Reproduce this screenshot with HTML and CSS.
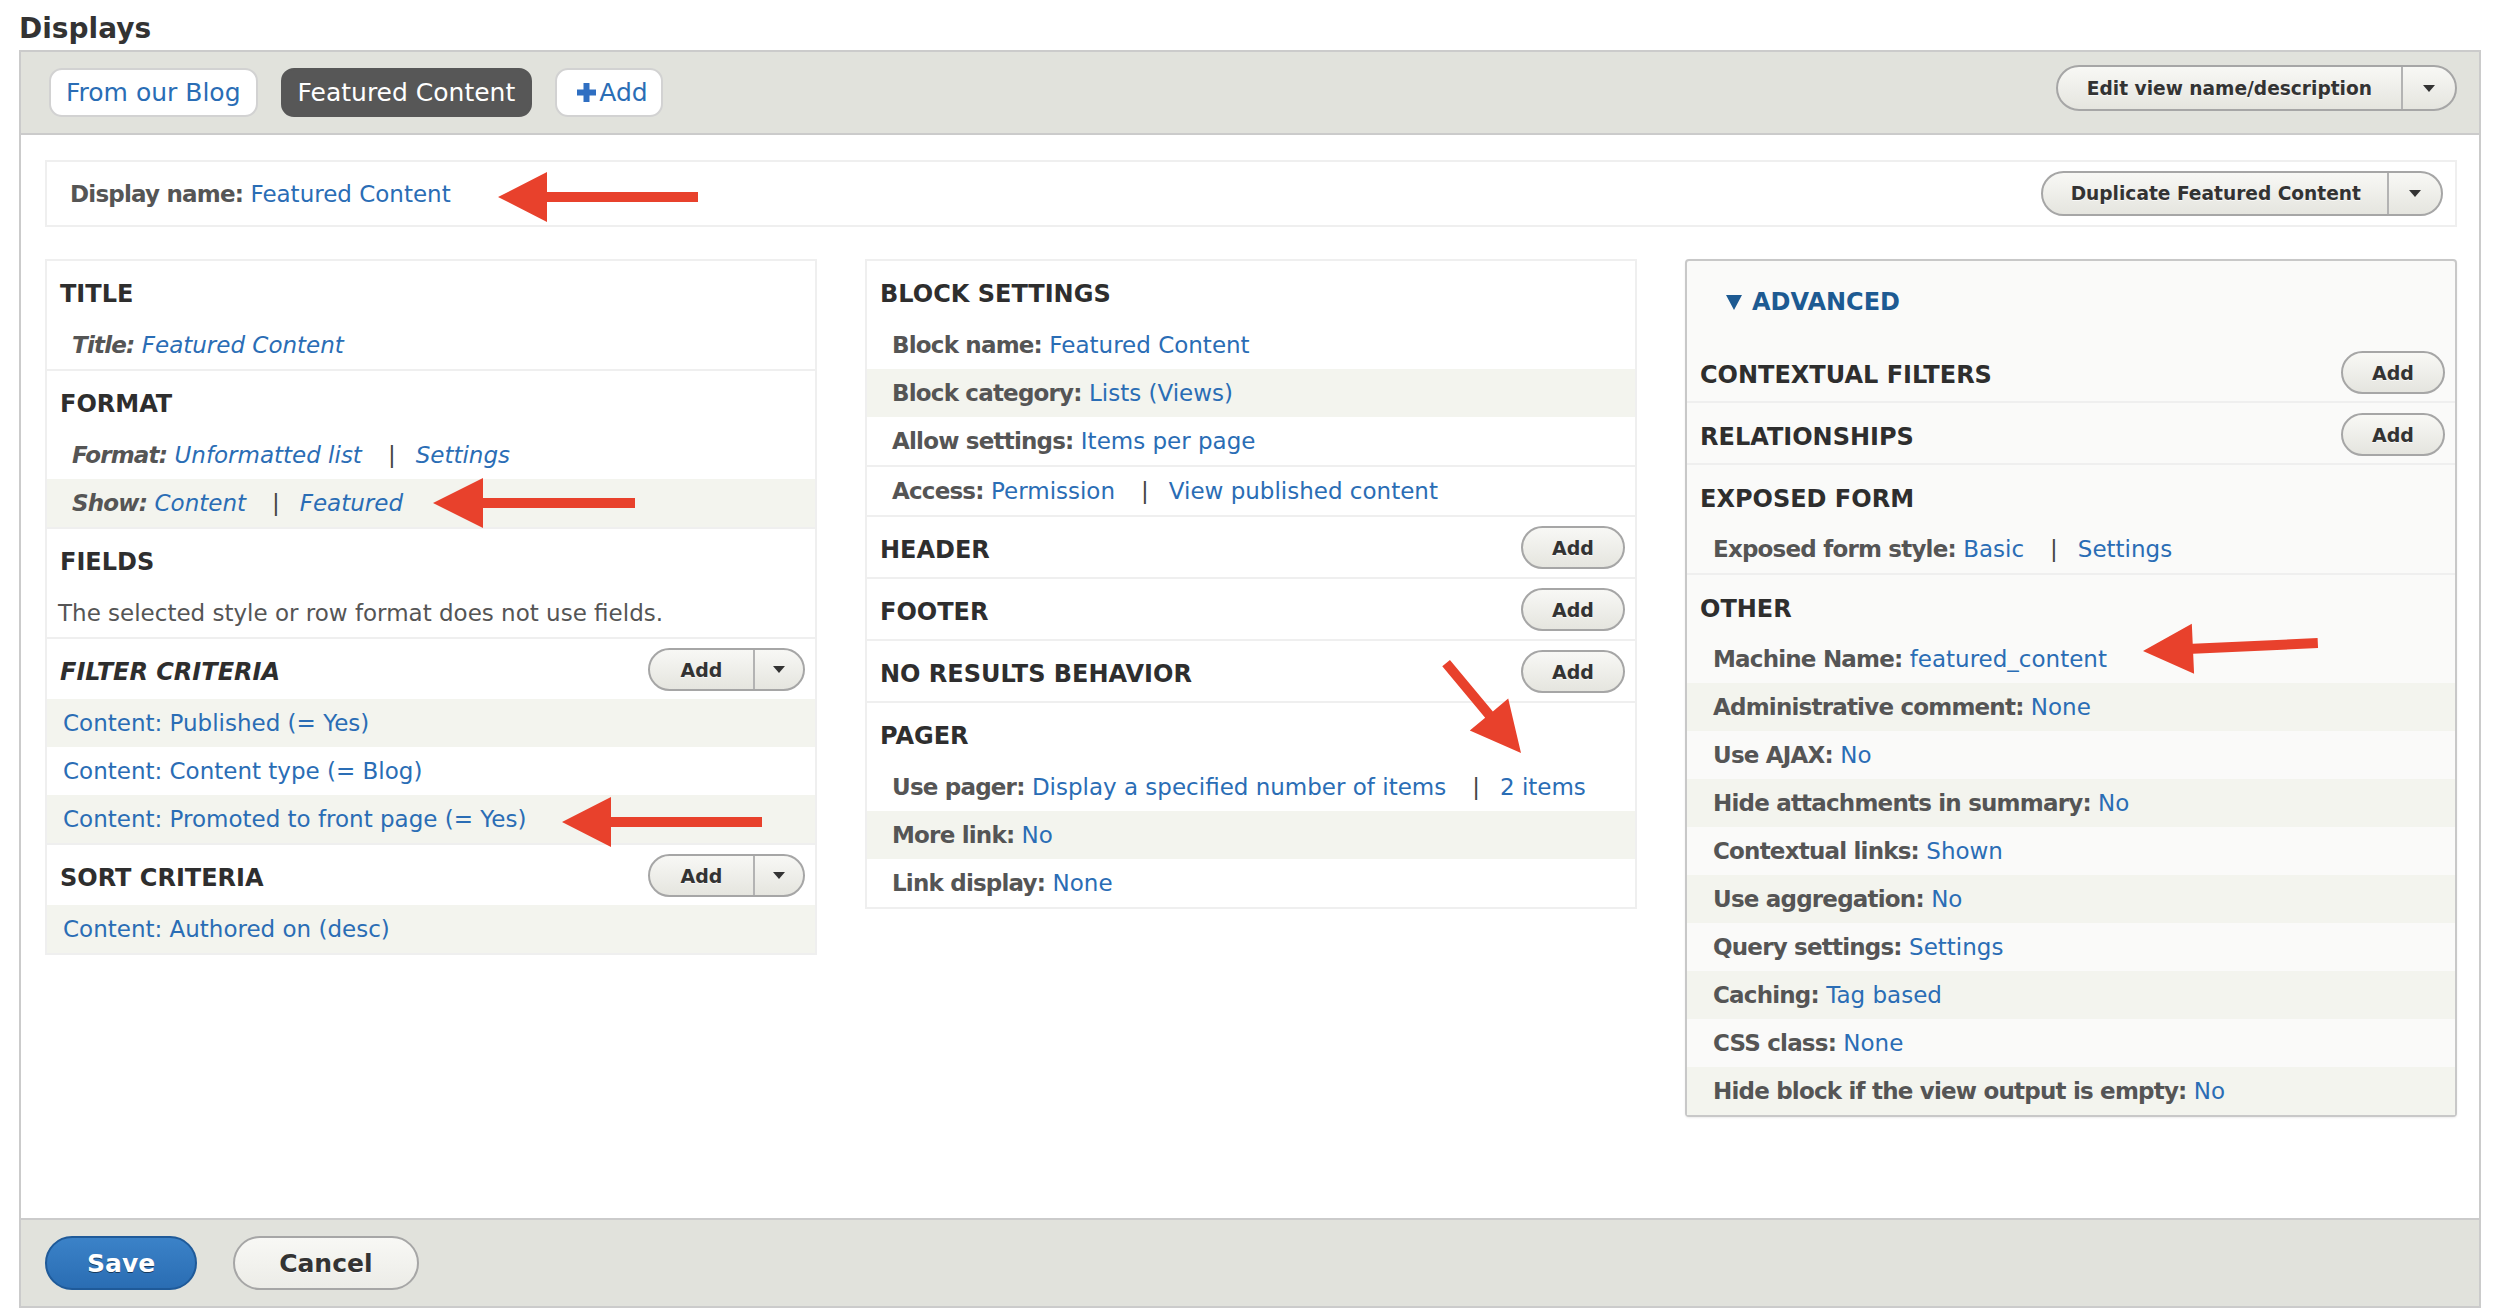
FILE: index.html
```html
<!DOCTYPE html>
<html lang="en">
<head>
<meta charset="utf-8">
<title>Displays</title>
<link rel="stylesheet" href="styles.css">
</head>
<body>
<div class="page">
  <h2 class="page-title">Displays</h2>
  <div class="displays">
    <div class="topbar">
      <div class="tabs">
        <a class="tab">From our Blog</a>
        <a class="tab active">Featured Content</a>
        <a class="tab add"><svg class="plus" width="19" height="19" viewBox="0 0 19 19"><path d="M6.5 0h6v6.5H19v6h-6.5V19h-6v-6.5H0v-6h6.5z" fill="currentColor"/></svg>Add</a>
      </div>
      <div class="split edit"><span class="split-main">Edit view name/description</span><span class="split-arrow"><i class="caret"></i></span></div>
    </div>

    <div class="body">
      <div class="namebox">
        <div class="nameline"><span class="label">Display name:</span> <a class="lnk">Featured Content</a></div>
        <div class="split dup"><span class="split-main">Duplicate Featured Content</span><span class="split-arrow"><i class="caret"></i></span></div>
      </div>

      <div class="columns">
        <!-- left column -->
        <div class="col">
          <section class="sec">
            <div class="sec-head"><h3>TITLE</h3></div>
            <div class="row ov"><span class="label">Title:</span> <a class="lnk">Featured Content</a></div>
          </section>
          <section class="sec">
            <div class="sec-head"><h3>FORMAT</h3></div>
            <div class="row ov"><span class="label">Format:</span> <a class="lnk">Unformatted list</a><span class="sep">|</span><a class="lnk">Settings</a></div>
            <div class="row ov alt"><span class="label">Show:</span> <a class="lnk">Content</a><span class="sep">|</span><a class="lnk">Featured</a></div>
          </section>
          <section class="sec">
            <div class="sec-head"><h3>FIELDS</h3></div>
            <div class="row note">The selected style or row format does not use fields.</div>
          </section>
          <section class="sec">
            <div class="sec-head"><h3 class="ovh">FILTER CRITERIA</h3>
              <div class="split small"><span class="split-main">Add</span><span class="split-arrow"><i class="caret"></i></span></div>
            </div>
            <div class="row lrow alt"><a class="lnk">Content: Published (= Yes)</a></div>
            <div class="row lrow"><a class="lnk">Content: Content type (= Blog)</a></div>
            <div class="row lrow alt"><a class="lnk">Content: Promoted to front page (= Yes)</a></div>
          </section>
          <section class="sec">
            <div class="sec-head"><h3>SORT CRITERIA</h3>
              <div class="split small"><span class="split-main">Add</span><span class="split-arrow"><i class="caret"></i></span></div>
            </div>
            <div class="row lrow alt"><a class="lnk">Content: Authored on (desc)</a></div>
          </section>
        </div>

        <!-- middle column -->
        <div class="col">
          <section class="sec">
            <div class="sec-head"><h3>BLOCK SETTINGS</h3></div>
            <div class="row"><span class="label">Block name:</span> <a class="lnk">Featured Content</a></div>
            <div class="row alt"><span class="label">Block category:</span> <a class="lnk">Lists (Views)</a></div>
            <div class="row"><span class="label">Allow settings:</span> <a class="lnk">Items per page</a></div>
          </section>
          <section class="sec">
            <div class="row"><span class="label">Access:</span> <a class="lnk">Permission</a><span class="sep">|</span><a class="lnk">View published content</a></div>
          </section>
          <section class="sec">
            <div class="sec-head"><h3>HEADER</h3><a class="btn">Add</a></div>
          </section>
          <section class="sec">
            <div class="sec-head"><h3>FOOTER</h3><a class="btn">Add</a></div>
          </section>
          <section class="sec">
            <div class="sec-head"><h3>NO RESULTS BEHAVIOR</h3><a class="btn">Add</a></div>
          </section>
          <section class="sec">
            <div class="sec-head"><h3>PAGER</h3></div>
            <div class="row"><span class="label">Use pager:</span> <a class="lnk">Display a specified number of items</a><span class="sep">|</span><a class="lnk">2 items</a></div>
            <div class="row alt"><span class="label">More link:</span> <a class="lnk">No</a></div>
            <div class="row"><span class="label">Link display:</span> <a class="lnk">None</a></div>
          </section>
        </div>

        <!-- right column -->
        <div class="col adv">
          <div class="adv-summary"><i class="tri"></i>ADVANCED</div>
          <section class="sec">
            <div class="sec-head"><h3>CONTEXTUAL FILTERS</h3><a class="btn">Add</a></div>
          </section>
          <section class="sec">
            <div class="sec-head"><h3>RELATIONSHIPS</h3><a class="btn">Add</a></div>
          </section>
          <section class="sec">
            <div class="sec-head"><h3>EXPOSED FORM</h3></div>
            <div class="row"><span class="label">Exposed form style:</span> <a class="lnk">Basic</a><span class="sep">|</span><a class="lnk">Settings</a></div>
          </section>
          <section class="sec">
            <div class="sec-head"><h3>OTHER</h3></div>
            <div class="row"><span class="label">Machine Name:</span> <a class="lnk">featured_content</a></div>
            <div class="row alt"><span class="label">Administrative comment:</span> <a class="lnk">None</a></div>
            <div class="row"><span class="label">Use AJAX:</span> <a class="lnk">No</a></div>
            <div class="row alt"><span class="label">Hide attachments in summary:</span> <a class="lnk">No</a></div>
            <div class="row"><span class="label">Contextual links:</span> <a class="lnk">Shown</a></div>
            <div class="row alt"><span class="label">Use aggregation:</span> <a class="lnk">No</a></div>
            <div class="row"><span class="label">Query settings:</span> <a class="lnk">Settings</a></div>
            <div class="row alt"><span class="label">Caching:</span> <a class="lnk">Tag based</a></div>
            <div class="row"><span class="label">CSS class:</span> <a class="lnk">None</a></div>
            <div class="row alt"><span class="label">Hide block if the view output is empty:</span> <a class="lnk">No</a></div>
          </section>
        </div>
      </div>
    </div>

    <div class="actions">
      <button class="btn-save" type="button">Save</button>
      <button class="btn-cancel" type="button">Cancel</button>
    </div>
  </div>

  <svg class="annot" width="2494" height="1310" viewBox="0 0 2494 1310">
    <g fill="#e8412c">
      <polygon points="498,197 547,172 547,192 698,192 698,202 547,202 547,222"/>
      <polygon points="433,503 483,478 483,498 635,498 635,508 483,508 483,528"/>
      <polygon points="562,822 611,797 611,817 762,817 762,827 611,827 611,847"/>
      <polygon transform="translate(1521 753) rotate(50.2)" points="0,0 -50,-25 -50,-5 -117,-5 -117,5 -50,5 -50,25"/>
      <polygon transform="translate(2143 651) rotate(-2.6)" points="0,0 50,-25 50,-5 175,-5 175,5 50,5 50,25"/>
    </g>
  </svg>
</div>
</body>
</html>
```

FILE: styles.css
```css
* { box-sizing: border-box; }
html, body { margin: 0; padding: 0; background: #fff; }
body {
  font-family: "DejaVu Sans", "Liberation Sans", sans-serif;
  font-size: 23px;
  color: #333;
}
.page {
  position: relative;
  width: 2494px;
  height: 1310px;
  padding: 0 13px 0 19px;
  overflow: hidden;
}
.page-title {
  margin: 0 0 6px;
  padding-top: 14px;
  font-size: 28px;
  line-height: 30px;
  font-weight: bold;
  color: #333;
}
.displays { border: 2px solid #cbcbcb; }

/* top bar */
.topbar {
  display: flex;
  justify-content: space-between;
  align-items: flex-start;
  background: #e1e2dc;
  border-bottom: 2px solid #cbcbcb;
  padding: 16px 22px 16px 28px;
}
.tabs { display: flex; gap: 23px; }
.tab {
  display: flex;
  align-items: center;
  height: 49px;
  padding: 0 15px;
  border: 2px solid #d2d2d2;
  border-radius: 13px;
  background: #fff;
  font-size: 25px;
  color: #2a6db5;
  white-space: nowrap;
}
.tab.active { background: #575757; border-color: #575757; color: #fff; }
.tab.add { padding: 0 13px 0 20px; gap: 3px; }
.plus { color: #2f6fc2; display: block; }

/* buttons */
.split {
  display: flex;
  align-items: stretch;
  border: 2px solid #a6a6a6;
  border-radius: 24px;
  background: linear-gradient(#f8f8f5, #e5e5df);
  font-size: 18.6px;
  font-weight: bold;
  color: #333;
  text-shadow: 0 1px rgba(255,255,255,0.7);
  white-space: nowrap;
}
.split-main { display: flex; align-items: center; justify-content: center; padding: 0 29px; }
.split-arrow {
  display: flex;
  align-items: center;
  justify-content: center;
  width: 54px;
  border-left: 2px solid #b3b3b3;
}
.caret {
  display: block;
  width: 0;
  height: 0;
  border-left: 6px solid transparent;
  border-right: 6px solid transparent;
  border-top: 7px solid #333;
}
.split.edit { height: 46px; margin-top: -3px; }
.split.dup { height: 45px; }
.split.dup .split-main { padding: 0 26px 0 28px; }
.split.small { height: 43px; font-size: 19px; }
.split.small .split-main { width: 103px; padding: 0; }
.split.small .split-arrow { width: 50px; }

.btn {
  display: flex;
  align-items: center;
  justify-content: center;
  width: 104px;
  height: 43px;
  border: 2px solid #a6a6a6;
  border-radius: 22px;
  background: linear-gradient(#f8f8f5, #e5e5df);
  font-size: 19px;
  font-weight: bold;
  color: #333;
  text-shadow: 0 1px rgba(255,255,255,0.7);
}

/* body */
.body { padding: 25px 22px 101px 24px; }
.namebox {
  display: flex;
  align-items: center;
  justify-content: space-between;
  height: 67px;
  border: 2px solid #efefef;
  padding: 0 12px 0 23px;
}
.label { font-weight: bold; color: #555; letter-spacing: -0.8px; }
.lnk { color: #2a6db5; }
.sep { margin: 0 20px 0 26px; color: #444; }

.columns {
  display: grid;
  grid-template-columns: repeat(3, 1fr);
  gap: 48px;
  align-items: start;
  margin-top: 32px;
}
.col { border: 2px solid #efefef; background: #fff; }
.col.adv {
  background: #fafaf9;
  border-color: #c8c8c8;
  border-radius: 4px;
  box-shadow: 0 1px 2px rgba(0,0,0,0.08);
}
.sec { border-bottom: 2px solid #efefef; }
.sec:last-child { border-bottom: none; }
.sec-head {
  display: flex;
  align-items: center;
  justify-content: space-between;
  height: 60px;
  padding: 6px 10px 0 13px;
}
.sec-head .btn, .sec-head .split { margin-top: -5px; }
.sec-head h3 {
  margin: 0;
  font-size: 24px;
  font-weight: bold;
  color: #2e2e2e;
}
.sec-head h3.ovh { font-style: italic; }
.adv .sec-head { padding-top: 8px; }
.row {
  display: block;
  height: 48px;
  line-height: 48px;
  padding-left: 25px;
  white-space: nowrap;
}
.row.alt { background: #f3f4ee; }
.row.ov { font-style: italic; }
.row.note { padding-left: 11px; color: #555; }
.row.lrow { padding-left: 16px; }
.adv .row { padding-left: 26px; }

.adv-summary {
  display: flex;
  align-items: center;
  height: 80px;
  padding: 2px 0 0 39px;
  font-size: 24px;
  font-weight: bold;
  color: #1d5a92;
}
.tri {
  display: block;
  width: 0;
  height: 0;
  border-left: 8px solid transparent;
  border-right: 8px solid transparent;
  border-top: 15px solid #1d5a92;
  margin-right: 10px;
}

/* actions */
.actions {
  display: flex;
  align-items: center;
  gap: 36px;
  height: 88px;
  background: #e1e2dc;
  border-top: 2px solid #cbcbcb;
  padding-left: 24px;
}
.btn-save, .btn-cancel {
  height: 54px;
  border-radius: 27px;
  font-family: "DejaVu Sans", "Liberation Sans", sans-serif;
  font-size: 25px;
  font-weight: bold;
  cursor: pointer;
}
.btn-save {
  padding: 0 40px;
  border: 2px solid #1f5a99;
  background: linear-gradient(#3b82c8, #2a6db3);
  color: #fff;
  text-shadow: 0 1px rgba(0,0,0,0.5);
}
.btn-cancel {
  padding: 0 44px;
  border: 2px solid #a6a6a6;
  background: linear-gradient(#f8f8f5, #ecece7);
  color: #333;
  text-shadow: 0 1px rgba(255,255,255,0.7);
}

.annot { position: absolute; top: 0; left: 0; pointer-events: none; }
```
